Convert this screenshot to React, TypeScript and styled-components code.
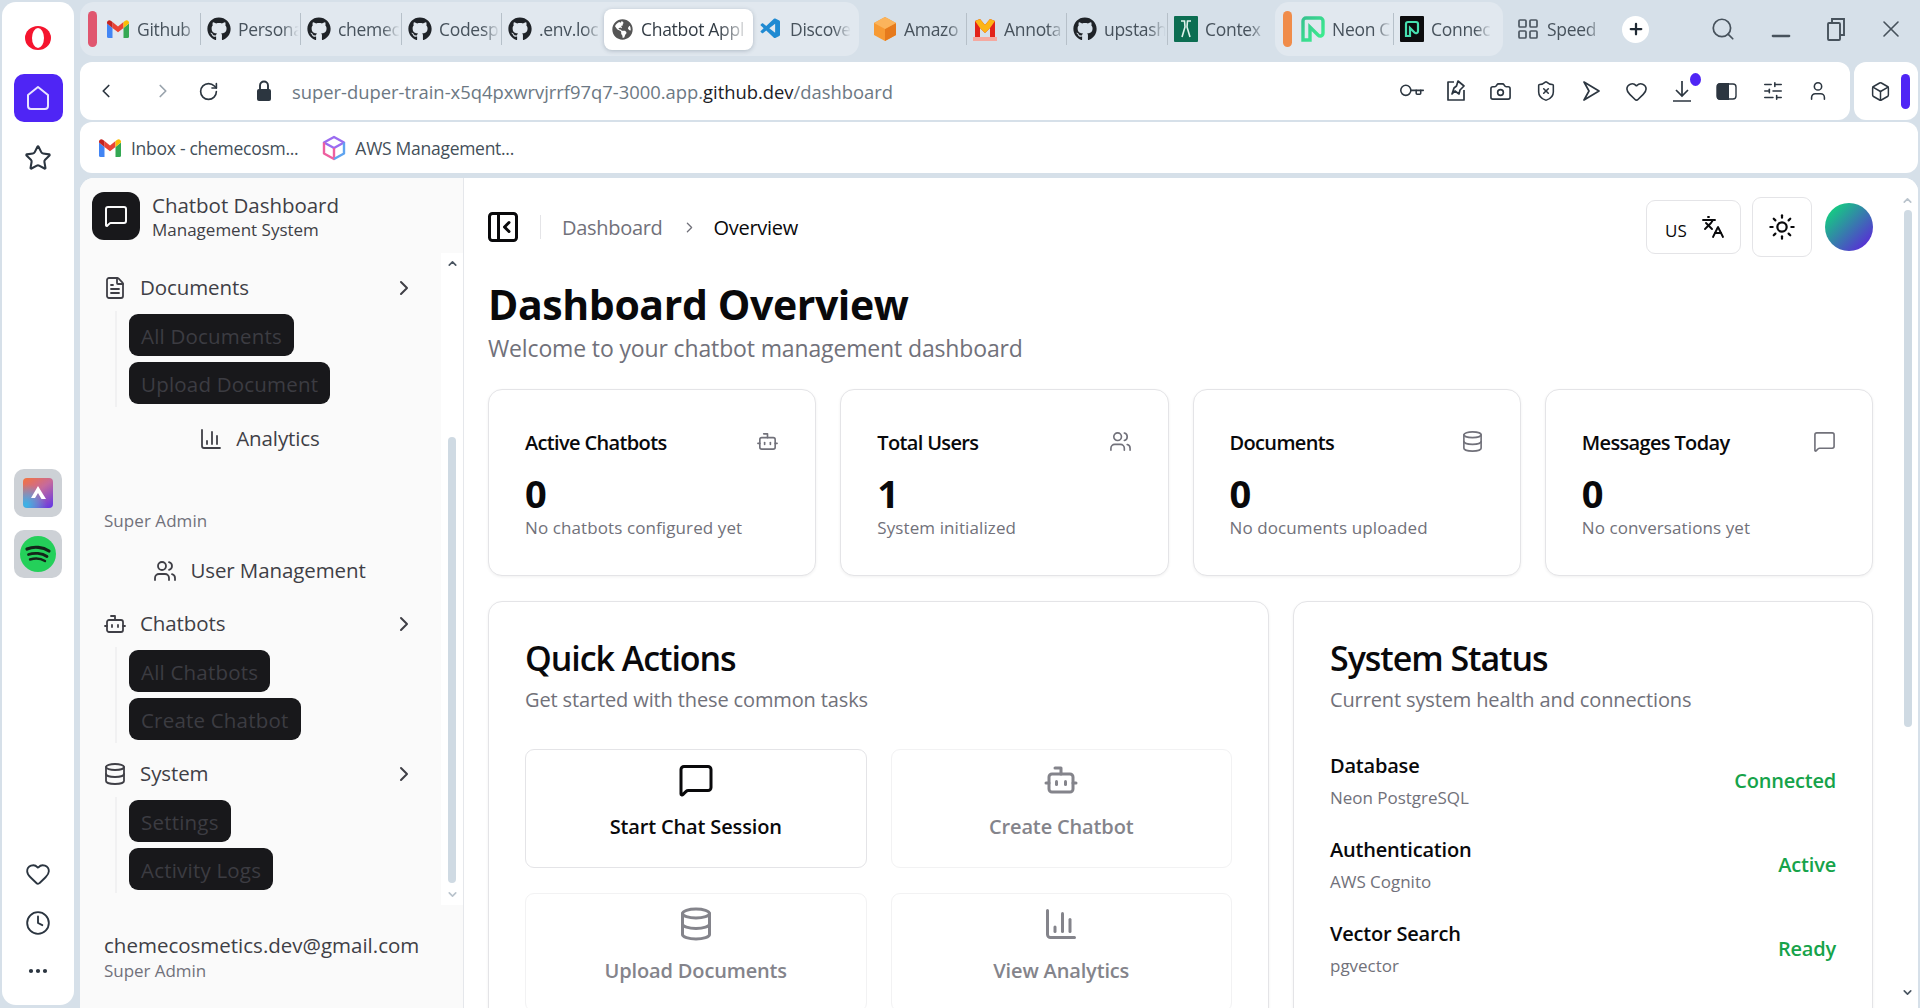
import React from 'react';
import styled, { createGlobalStyle } from 'styled-components';
import {
  Bot,
  Box,
  Camera,
  ChartColumn,
  ChevronDown,
  ChevronLeft,
  ChevronRight,
  ChevronUp,
  Clock,
  Database,
  Ellipsis,
  FileText,
  Heart,
  Key,
  Languages,
  LayoutGrid,
  MessageSquare,
  Minus,
  PanelLeftClose,
  Plus,
  RotateCw,
  Search,
  ShieldX,
  SlidersHorizontal,
  Star,
  Sun,
  User,
  Users,
  X,
} from 'lucide-react';
import { FaGithub, FaGlobeAmericas } from 'react-icons/fa';
import { VscVscode } from 'react-icons/vsc';

const GlobalStyle = createGlobalStyle`
  * { box-sizing: border-box; }
  html, body {
    margin: 0;
    height: 1008px;
    overflow: hidden;
    background: #d6e0e9;
    font-family: "Open Sans", "Noto Sans", "Liberation Sans", sans-serif;
  }
`;

const Shell = styled.div`
  display: flex;
  gap: 6px;
  height: 1008px;
  padding: 2px 2px 0 2px;
`;

/* opera rail */
const Rail = styled.aside`
  width: 72px;
  height: 1003px;
  flex: none;
  display: flex;
  flex-direction: column;
  align-items: center;
  background: #fff;
  border-radius: 14px;
  color: #2b3540;
`;

const RailLogo = styled.div`
  height: 24px;
  margin-top: 24px;
  display: flex;
`;

const HomeButton = styled.div`
  width: 49px;
  height: 48px;
  margin-top: 24px;
  border-radius: 10px;
  background: #4f25f5;
  display: flex;
  align-items: center;
  justify-content: center;
`;

const RailStar = styled.div`
  margin-top: 22px;
  height: 28px;
  display: flex;
`;

const AppTile = styled.div<{ $top: number }>`
  width: 48px;
  height: 48px;
  margin-top: ${(p) => p.$top}px;
  background: #cdd1d6;
  border-radius: 10px;
  display: flex;
  align-items: center;
  justify-content: center;
`;

const AriaMark = styled.div`
  width: 30px;
  height: 30px;
  border-radius: 4px;
  background:
    radial-gradient(circle at 10% 90%, #37b6e8 0%, transparent 55%),
    linear-gradient(145deg, #f5743c 0%, #c66a9c 45%, #5f35e8 100%);
  display: flex;
  align-items: center;
  justify-content: center;
`;

const RailBottom = styled.div`
  margin-top: auto;
  padding-bottom: 22px;
  display: flex;
  flex-direction: column;
  align-items: center;
  gap: 23px;
`;

const Column = styled.div`
  flex: 1;
  min-width: 0;
  display: flex;
  flex-direction: column;
`;

/* tab strip */
const TabStrip = styled.div`
  height: 54px;
  flex: none;
  display: flex;
  align-items: stretch;
`;

const TabGroup = styled.div<{ $width: number }>`
  display: flex;
  align-items: center;
  width: ${(p) => p.$width}px;
  padding-left: 8px;
  background: #e1e8ef;
  border-radius: 14px;
`;

const LooseTabs = styled.div`
  width: 408px;
  margin-left: 8px;
  display: flex;
  align-items: center;
`;

const GroupMarker = styled.span<{ $color: string }>`
  width: 9px;
  height: 36px;
  border-radius: 5px;
  background: ${(p) => p.$color};
  margin-right: 3px;
  flex: none;
`;

const Tab = styled.div<{ $width?: number; $sep?: boolean; $active?: boolean }>`
  width: ${(p) => p.$width ?? 100}px;
  height: ${(p) => (p.$active ? '41px' : '32px')};
  flex: none;
  display: flex;
  align-items: center;
  gap: 7px;
  padding-left: 6px;
  border-right: 1px solid ${(p) => (p.$sep ? '#b6c0c9' : 'transparent')};
  font-size: 17.5px;
  letter-spacing: -0.3px;
  color: #47525c;
  ${(p) =>
    p.$active
      ? `background:#fff;border-radius:8px;box-shadow:0 1px 4px rgba(60,80,100,.3);color:#333c45;`
      : ''}
`;

const SpeedTab = styled(Tab)`
  align-self: center;
  margin-left: 7px;
`;

const TabIcon = styled.span`
  width: 24px;
  height: 24px;
  flex: none;
  display: flex;
  align-items: center;
  justify-content: center;
  color: #1f2328;
`;

const TabLabel = styled.span`
  flex: 1;
  min-width: 0;
  overflow: hidden;
  white-space: nowrap;
  -webkit-mask-image: linear-gradient(90deg, #000 70%, transparent 98%);
  mask-image: linear-gradient(90deg, #000 70%, transparent 98%);
`;

const NewTab = styled.div`
  width: 27px;
  height: 27px;
  margin-left: 18px;
  align-self: center;
  border-radius: 50%;
  background: #fff;
  display: flex;
  align-items: center;
  justify-content: center;
  color: #1f2933;
`;

const WindowTools = styled.div`
  margin-left: auto;
  display: flex;
  align-items: center;
  gap: 31px;
  padding-right: 13px;
  color: #47525c;
`;

const MinimizeIcon = styled(Minus)`
  margin-top: 14px;
`;

/* address row */
const AddressRow = styled.div`
  height: 58px;
  flex: none;
  margin-top: 6px;
  display: flex;
  gap: 4px;
`;

const AddressBar = styled.div`
  flex: 1;
  display: flex;
  align-items: center;
  background: #fff;
  border-radius: 12px;
  padding-left: 15px;
  color: #2c3640;
`;

const NavButton = styled.span<{ $dim?: boolean; $gap: number }>`
  display: flex;
  margin-right: ${(p) => p.$gap}px;
  color: ${(p) => (p.$dim ? '#9aa4ad' : '#2c3640')};
`;

const Url = styled.div`
  font-size: 18.4px;
  letter-spacing: -0.01px;
  color: #6c7883;
  white-space: nowrap;
  b {
    font-weight: 400;
    color: #1b2026;
  }
`;

const AddressTools = styled.div`
  margin-left: auto;
  display: flex;
  align-items: center;
  gap: 22.8px;
  padding-right: 21px;
`;

const KeyIcon = styled(Key)`
  transform: rotate(45deg);
`;

const DownloadWrap = styled.span`
  position: relative;
  display: flex;
`;

const Dot = styled.span`
  position: absolute;
  top: -6px;
  right: -8px;
  width: 11px;
  height: 13px;
  border-radius: 50%;
  background: #4f25f5;
`;

const ExtensionBar = styled.div`
  width: 64px;
  flex: none;
  display: flex;
  align-items: center;
  gap: 10px;
  padding-left: 16px;
  background: #fff;
  border-radius: 12px;
  color: #2c3640;
`;

const ExtensionMark = styled.span`
  width: 9px;
  height: 35px;
  border-radius: 5px;
  background: #4f25f5;
`;

const BookmarksBar = styled.div`
  height: 51px;
  flex: none;
  margin-top: 2px;
  display: flex;
  align-items: center;
  padding-left: 18px;
  background: #fff;
  border-radius: 12px;
  font-size: 17.5px;
  letter-spacing: -0.28px;
  color: #444f59;
`;

const Bookmark = styled.div`
  display: flex;
  align-items: center;
  gap: 9px;
  margin-right: 24px;
`;

/* page */
const Page = styled.div`
  margin-top: 5px;
  flex: 1;
  min-height: 0;
  display: flex;
  overflow: hidden;
  background: #fff;
  border-radius: 14px 14px 0 0;
`;

const Sidebar = styled.aside`
  width: 384px;
  flex: none;
  display: flex;
  flex-direction: column;
  background: #fafafa;
  border-right: 1px solid #e5e7eb;
`;

const SidebarHead = styled.div`
  height: 75px;
  flex: none;
  display: flex;
  align-items: flex-start;
  gap: 12px;
  padding: 14px 0 0 12px;
`;

const LogoBox = styled.div`
  width: 48px;
  height: 48px;
  border-radius: 12px;
  background: #18181b;
  color: #fafafa;
  display: flex;
  align-items: center;
  justify-content: center;
`;

const BrandName = styled.div`
  font-size: 20.5px;
  line-height: 27px;
  font-weight: 500;
  letter-spacing: -0.03px;
  color: #3f3f46;
`;

const BrandSub = styled.div`
  font-size: 17px;
  line-height: 22px;
  color: #3f3f46;
`;

const SidebarBody = styled.div`
  height: 652px;
  flex: none;
  display: flex;
`;

const NavList = styled.nav`
  flex: 1;
  min-width: 0;
  padding: 11px 11px 0 12px;
`;

const NavRow = styled.div<{ $top?: number; $centered?: boolean }>`
  height: 47px;
  margin-top: ${(p) => p.$top ?? 0}px;
  display: flex;
  align-items: center;
  gap: 13px;
  padding: 0 14px 0 11px;
  justify-content: ${(p) => (p.$centered ? 'center' : 'flex-start')};
  font-size: 20.5px;
  font-weight: 500;
  letter-spacing: -0.1px;
  color: #3f3f46;
  svg {
    flex: none;
  }
`;

const RowText = styled.span`
  margin-bottom: 2px;
`;

const RowChevron = styled.span`
  margin-left: auto;
  display: flex;
`;

const SubList = styled.div`
  margin-left: 23px;
  padding: 3px 0 3px 12px;
  border-left: 2px solid #f1f1f2;
  display: flex;
  flex-direction: column;
  align-items: flex-start;
  gap: 6px;
`;

const SubPill = styled.div`
  height: 42px;
  padding: 1px 12px 0;
  display: flex;
  align-items: center;
  border-radius: 9px;
  background: #18181b;
  color: #3c3c42;
  font-size: 20.5px;
  font-weight: 500;
  letter-spacing: 0.2px;
`;

const GroupLabel = styled.div`
  height: 24px;
  margin-top: 47px;
  padding-left: 12px;
  line-height: 24px;
  font-size: 17px;
  font-weight: 500;
  letter-spacing: 0.05px;
  color: #71717a;
`;

const ScrollTrack = styled.div<{ $width: number; $bg: string }>`
  width: ${(p) => p.$width}px;
  flex: none;
  display: flex;
  flex-direction: column;
  align-items: center;
  background: ${(p) => p.$bg};
  color: #66727e;
`;

const ScrollArrow = styled.span<{ $top?: number; $faint?: boolean }>`
  display: flex;
  margin-top: ${(p) => p.$top ?? 0}px;
  color: ${(p) => (p.$faint ? '#b9c3cc' : '#4a5561')};
`;

const ScrollThumb = styled.div<{ $top: number; $height: number }>`
  width: 8px;
  height: ${(p) => p.$height}px;
  margin-top: ${(p) => p.$top}px;
  border-radius: 4px;
  background: #cfdae3;
`;

const SidebarFoot = styled.div`
  flex: 1;
  padding: 26px 0 0 24px;
`;

const FootEmail = styled.div`
  font-size: 20.5px;
  line-height: 28px;
  font-weight: 500;
  color: #3f3f46;
`;

const FootRole = styled.div`
  font-size: 17px;
  line-height: 24px;
  letter-spacing: -0.05px;
  color: #71717a;
`;

const Main = styled.main`
  flex: 1;
  min-width: 0;
  padding: 19px 24px 0 24px;
  overflow: hidden;
`;

const TopBar = styled.header`
  height: 60px;
  display: flex;
  align-items: center;
`;

const SidebarToggle = styled(PanelLeftClose)`
  margin-left: -3px;
`;

const BarDivider = styled.span`
  width: 1px;
  height: 24px;
  margin: 0 21px 0 19px;
  background: #e4e4e7;
`;

const Crumb = styled.span<{ $current?: boolean }>`
  font-size: 20px;
  letter-spacing: -0.3px;
  color: ${(p) => (p.$current ? '#09090b' : '#71717a')};
`;

const CrumbArrow = styled.span`
  display: flex;
  margin: 0 16px 0 18px;
  color: #71717a;
`;

const TopActions = styled.div`
  margin-left: auto;
  display: flex;
  align-items: center;
`;

const LangButton = styled.div`
  width: 95px;
  height: 54px;
  display: flex;
  align-items: center;
  gap: 14px;
  padding-left: 18px;
  border: 1px solid #e4e4e7;
  border-radius: 9px;
  font-size: 17px;
  color: #09090b;
  span {
    margin-top: 6px;
  }
`;

const ThemeButton = styled.div`
  width: 60px;
  height: 60px;
  margin-left: 11px;
  display: flex;
  align-items: center;
  justify-content: center;
  border: 1px solid #e4e4e7;
  border-radius: 9px;
  color: #09090b;
`;

const Avatar = styled.div`
  width: 48px;
  height: 48px;
  margin-left: 13px;
  border-radius: 50%;
  background: linear-gradient(135deg, #12d27f 10%, #5a2ad8 90%);
`;

const PageTitle = styled.h1`
  margin: 25px 0 0;
  font-size: 41px;
  line-height: 44px;
  font-weight: 700;
  letter-spacing: -0.4px;
  color: #09090b;
`;

const PageSub = styled.p`
  margin: 7px 0 0;
  font-size: 23px;
  line-height: 30px;
  letter-spacing: -0.14px;
  color: #71717a;
`;

const StatGrid = styled.div`
  margin-top: 26px;
  display: grid;
  grid-template-columns: repeat(4, 1fr);
  gap: 24px;
`;

const Card = styled.section`
  background: #fff;
  border: 1px solid #e4e4e7;
  border-radius: 14px;
  box-shadow: 0 1px 3px rgba(0, 0, 0, 0.06);
`;

const StatCard = styled(Card)`
  height: 187px;
  padding: 38px 36px 0;
`;

const StatHead = styled.div`
  height: 28px;
  display: flex;
  align-items: center;
  justify-content: space-between;
  color: #71717a;
  svg {
    margin-top: -2px;
  }
`;

const StatTitle = styled.span`
  font-size: 20px;
  font-weight: 600;
  letter-spacing: -0.65px;
  color: #09090b;
`;

const StatValue = styled.div`
  margin-top: 15px;
  font-size: 38px;
  line-height: 44px;
  font-weight: 700;
  color: #09090b;
`;

const StatNote = styled.div`
  margin-top: 1px;
  font-size: 17px;
  line-height: 24px;
  letter-spacing: 0.1px;
  color: #71717a;
`;

const PanelGrid = styled.div`
  margin-top: 25px;
  display: grid;
  grid-template-columns: 781px 1fr;
  gap: 24px;
`;

const Panel = styled(Card)`
  height: 520px;
  padding: 34px 36px 0;
`;

const PanelTitle = styled.h2`
  margin: 0;
  font-size: 34px;
  line-height: 44px;
  font-weight: 600;
  letter-spacing: -1.05px;
  color: #09090b;
`;

const PanelSub = styled.p`
  margin: 6px 0 0;
  font-size: 20px;
  line-height: 28px;
  letter-spacing: -0.13px;
  color: #71717a;
`;

const ActionGrid = styled.div`
  margin-top: 35px;
  display: grid;
  grid-template-columns: 1fr 1fr;
  gap: 25px 24px;
`;

const ActionCard = styled.div<{ $dim?: boolean }>`
  height: 119px;
  display: flex;
  flex-direction: column;
  align-items: center;
  padding-top: 12px;
  border: 1px solid ${(p) => (p.$dim ? '#f2f2f3' : '#e4e4e7')};
  border-radius: 9px;
  color: ${(p) => (p.$dim ? '#84848b' : '#09090b')};
  font-size: 20px;
  font-weight: 600;
  letter-spacing: -0.15px;
`;

const ActionText = styled.span`
  margin-top: 15px;
  line-height: 28px;
`;

const StatusList = styled.div`
  margin-top: 38px;
  display: flex;
  flex-direction: column;
  gap: 26px;
`;

const StatusRow = styled.div`
  height: 58px;
  display: flex;
  align-items: center;
  justify-content: space-between;
`;

const StatusName = styled.div`
  font-size: 20px;
  line-height: 28px;
  font-weight: 600;
  letter-spacing: -0.2px;
  color: #09090b;
`;

const StatusNote = styled.div`
  margin-top: 6px;
  font-size: 17px;
  line-height: 24px;
  letter-spacing: -0.02px;
  color: #71717a;
`;

const StatusValue = styled.span`
  margin-top: -2px;
  font-size: 20px;
  font-weight: 600;
  letter-spacing: -0.2px;
  color: #16a34a;
`;

const GmailIcon = ({ size = 24 }: { size?: number }) => (
  <svg width={size} height={size} viewBox="0 0 24 24">
    <path d="M1 6.5V19.5A1.5 1.5 0 0 0 2.5 21H6.5V11L1 6.5Z" fill="#4285F4" />
    <path d="M23 6.5V19.5A1.5 1.5 0 0 1 21.5 21H17.5V11L23 6.5Z" fill="#34A853" />
    <path d="M6.5 11V5L12 9.5L17.5 5V11L12 15.2L6.5 11Z" fill="#EA4335" />
    <path d="M1 6.5V5.5C1 3.5 3.3 2.4 4.8 3.7L6.5 5V11L1 6.5Z" fill="#C5221F" />
    <path d="M23 6.5V5.5C23 3.5 20.7 2.4 19.2 3.7L17.5 5V11L23 6.5Z" fill="#FBBC04" />
  </svg>
);

const AwsCube = () => (
  <svg width={24} height={26} viewBox="0 0 24 26" fill="none" strokeWidth="2.4" strokeLinejoin="round">
    <path d="M12 2L22 7.5L12 13L2 7.5L12 2Z" stroke="#9b6cf0" />
    <path d="M2 7.5V18.5L12 24V13" stroke="#ee5fa0" />
    <path d="M22 7.5V18.5L12 24" stroke="#5fa4f0" />
  </svg>
);

const AmazonBox = () => (
  <svg width={24} height={26} viewBox="0 0 24 26">
    <path d="M12 1L23 7V19L12 25L1 19V7L12 1Z" fill="#f79a33" />
    <path d="M12 13L23 7V19L12 25V13Z" fill="#e67a1c" />
    <path d="M12 13L1 7L12 1L23 7L12 13Z" fill="#fbb45c" />
  </svg>
);

const AnnotateIcon = () => (
  <svg width={24} height={24} viewBox="0 0 24 24">
    <rect x="0" y="20" width="24" height="4" fill="#f5a9a0" />
    <path d="M2 20V4L7 2L12 8L17 2L22 4V20H17V11L12 16L7 11V20Z" fill="#e2231a" />
    <path d="M2 4L7 2L12 8L17 2L22 4L17 11L12 16L7 11Z" fill="#fdb515" />
  </svg>
);

const ContextIcon = () => (
  <svg width={24} height={26} viewBox="0 0 24 26" fill="none" stroke="#dff3ec" strokeWidth="1.6">
    <rect width="24" height="26" rx="1" fill="#0c6e52" stroke="none" />
    <path d="M7 5H10.5L11 11L8 21M17 5H13.5L13 11L16 21" />
  </svg>
);

const NeonIcon = () => (
  <svg width={24} height={26} viewBox="0 0 24 26" fill="none">
    <defs>
      <linearGradient id="neonGrad" x1="0" y1="0" x2="1" y2="1">
        <stop offset="0" stopColor="#37c38f" />
        <stop offset="1" stopColor="#3cf08f" />
      </linearGradient>
    </defs>
    <path
      d="M2 24V5A3 3 0 0 1 5 2H19A3 3 0 0 1 22 5V17C22 20 19 21 17 19L9 11V24Z"
      stroke="url(#neonGrad)"
      strokeWidth="3.4"
    />
  </svg>
);

const ConnectIcon = () => (
  <svg width={24} height={26} viewBox="0 0 24 26" fill="none">
    <rect width="24" height="26" rx="1" fill="#0c0c0e" />
    <path
      d="M6 20V8A2 2 0 0 1 8 6H16A2 2 0 0 1 18 8V15C18 17 16 18 14.5 16.5L10 12V20Z"
      stroke="#46e0b0"
      strokeWidth="2.2"
    />
  </svg>
);

const PinNoteIcon = () => (
  <svg width={22} height={24} viewBox="0 0 22 24" fill="none" stroke="currentColor" strokeWidth="1.7" strokeLinejoin="round">
    <path d="M9 3H3V21H19V11" />
    <path d="M13 2L19 7L15 11L14 15L10 12L7 15L9 9L11.5 7Z" />
  </svg>
);

const FlowIcon = () => (
  <svg width={22} height={24} viewBox="0 0 22 24" fill="none" stroke="currentColor" strokeWidth="1.7" strokeLinejoin="round">
    <path d="M4 3L19 12L4 21L9 12L4 3Z" />
  </svg>
);

const ContrastIcon = () => (
  <svg width={24} height={24} viewBox="0 0 24 24" fill="none">
    <rect x="2" y="5" width="19" height="15" rx="3" stroke="#2c3640" strokeWidth="1.4" />
    <path d="M5 4H14V21H5A3 3 0 0 1 2 18V7A3 3 0 0 1 5 4Z" fill="#2c3640" />
  </svg>
);

const LockIcon = () => (
  <svg width={16} height={22} viewBox="0 0 16 22" fill="none">
    <path d="M4 10V5.5A4 4 0 0 1 12 5.5V10" stroke="#2c3640" strokeWidth="1.9" />
    <rect x="1" y="9" width="14" height="12" rx="2" fill="#2c3640" />
  </svg>
);

const SpotifyIcon = () => (
  <svg width={36} height={36} viewBox="0 0 36 36" fill="none" stroke="#14251a" strokeLinecap="round">
    <circle cx="18" cy="18" r="18" fill="#24d05a" stroke="none" />
    <path d="M7 13C14 10 23 11 29 15" strokeWidth="3.2" />
    <path d="M8.5 18.5C14 16.5 22 17 27 20.5" strokeWidth="2.8" />
    <path d="M10 23.5C15 22 21 22.5 25 25" strokeWidth="2.4" />
  </svg>
);

const tabsFirst = [
  { label: 'Github', icon: <GmailIcon />, width: 101, sep: true },
  { label: 'Persona', icon: <FaGithub size={24} />, width: 100, sep: true },
  { label: 'chemec', icon: <FaGithub size={24} />, width: 101, sep: true },
  { label: 'Codesp', icon: <FaGithub size={24} />, width: 100, sep: true },
  { label: '.env.loc', icon: <FaGithub size={24} />, width: 102 },
];

const tabsLoose = [
  { label: 'Amazo', icon: <AmazonBox />, sep: true, width: 100 },
  { label: 'Annota', icon: <AnnotateIcon />, sep: true, width: 100 },
  { label: 'upstash', icon: <FaGithub size={24} />, sep: true, width: 101 },
  { label: 'Contex', icon: <ContextIcon />, width: 100 },
];

const subLists: Record<string, string[]> = {
  Documents: ['All Documents', 'Upload Document'],
  Chatbots: ['All Chatbots', 'Create Chatbot'],
  System: ['Settings', 'Activity Logs'],
};

const stats = [
  { title: 'Active Chatbots', value: '0', note: 'No chatbots configured yet', icon: <Bot size={23} strokeWidth={1.7} /> },
  { title: 'Total Users', value: '1', note: 'System initialized', icon: <Users size={23} strokeWidth={1.7} /> },
  { title: 'Documents', value: '0', note: 'No documents uploaded', icon: <Database size={23} strokeWidth={1.7} /> },
  { title: 'Messages Today', value: '0', note: 'No conversations yet', icon: <MessageSquare size={23} strokeWidth={1.7} /> },
];

const actions = [
  { label: 'Start Chat Session', Icon: MessageSquare },
  { label: 'Create Chatbot', Icon: Bot, dim: true },
  { label: 'Upload Documents', Icon: Database, dim: true },
  { label: 'View Analytics', Icon: ChartColumn, dim: true },
];

const services = [
  { name: 'Database', note: 'Neon PostgreSQL', status: 'Connected' },
  { name: 'Authentication', note: 'AWS Cognito', status: 'Active' },
  { name: 'Vector Search', note: 'pgvector', status: 'Ready' },
];

const CollapsibleNav = ({ title, icon, top }: { title: string; icon: React.ReactNode; top: number }) => (
  <>
    <NavRow $top={top}>
      {icon}
      <RowText>{title}</RowText>
      <RowChevron>
        <ChevronRight size={24} strokeWidth={2} />
      </RowChevron>
    </NavRow>
    <SubList>
      {subLists[title].map((item) => (
        <SubPill key={item}>{item}</SubPill>
      ))}
    </SubList>
  </>
);

const App = () => {
  return (
    <>
      <GlobalStyle />
      <Shell>
        <Rail>
          <RailLogo>
            <svg width={26} height={24} viewBox="0 0 26 24">
              <ellipse cx="13" cy="12" rx="13" ry="12" fill="#f5142e" />
              <ellipse cx="13" cy="12" rx="6" ry="10" fill="#fff" />
            </svg>
          </RailLogo>
          <HomeButton>
            <svg width={24} height={26} viewBox="0 0 24 26" fill="none" stroke="#e9e4ff" strokeWidth="2" strokeLinejoin="round">
              <path d="M12 2L22 10V21A3 3 0 0 1 19 24H5A3 3 0 0 1 2 21V10L12 2Z" />
            </svg>
          </HomeButton>
          <RailStar>
            <Star size={28} strokeWidth={1.8} />
          </RailStar>
          <AppTile $top={297}>
            <AriaMark>
              <svg width={20} height={20} viewBox="0 0 20 20" fill="#fff">
                <path d="M10 3L13 8L18 16H13.5L10 10L7 15H3L10 3Z" />
              </svg>
            </AriaMark>
          </AppTile>
          <AppTile $top={13}>
            <SpotifyIcon />
          </AppTile>
          <RailBottom>
            <Heart size={26} strokeWidth={1.7} />
            <Clock size={26} strokeWidth={1.7} />
            <Ellipsis size={24} strokeWidth={2.2} />
          </RailBottom>
        </Rail>

        <Column>
          <TabStrip>
            <TabGroup $width={779}>
              <GroupMarker $color="#e0566f" />
              {tabsFirst.map((t) => (
                <Tab key={t.label} $width={t.width} $sep={t.sep}>
                  <TabIcon>{t.icon}</TabIcon>
                  <TabLabel>{t.label}</TabLabel>
                </Tab>
              ))}
              <Tab $width={149} $active>
                <TabIcon>
                  <FaGlobeAmericas size={21} color="#555" />
                </TabIcon>
                <TabLabel>Chatbot Appl</TabLabel>
              </Tab>
              <Tab>
                <TabIcon>
                  <VscVscode size={24} color="#1f8ad2" />
                </TabIcon>
                <TabLabel>Discove</TabLabel>
              </Tab>
            </TabGroup>
            <LooseTabs>
              {tabsLoose.map((t) => (
                <Tab key={t.label} $width={t.width} $sep={t.sep}>
                  <TabIcon>{t.icon}</TabIcon>
                  <TabLabel>{t.label}</TabLabel>
                </Tab>
              ))}
            </LooseTabs>
            <TabGroup $width={228}>
              <GroupMarker $color="#f08c4a" />
              <Tab $width={99} $sep>
                <TabIcon>
                  <NeonIcon />
                </TabIcon>
                <TabLabel>Neon C</TabLabel>
              </Tab>
              <Tab $width={100}>
                <TabIcon>
                  <ConnectIcon />
                </TabIcon>
                <TabLabel>Connec</TabLabel>
              </Tab>
            </TabGroup>
            <SpeedTab $width={94}>
              <TabIcon>
                <LayoutGrid size={24} strokeWidth={1.7} color="#4d5762" />
              </TabIcon>
              <TabLabel>Speed</TabLabel>
            </SpeedTab>
            <NewTab>
              <Plus size={18} strokeWidth={3} />
            </NewTab>
            <WindowTools>
              <Search size={26} strokeWidth={1.6} />
              <MinimizeIcon size={28} strokeWidth={2} />
              <svg width={20} height={24} viewBox="0 0 20 24" fill="none" stroke="currentColor" strokeWidth="1.9">
                <rect x="2" y="6" width="12" height="17" rx="1" />
                <path d="M6 6V2H18V18H14" />
              </svg>
              <X size={28} strokeWidth={1.4} />
            </WindowTools>
          </TabStrip>

          <AddressRow>
            <AddressBar>
              <NavButton $gap={35}>
                <ChevronLeft size={22} strokeWidth={1.9} />
              </NavButton>
              <NavButton $dim $gap={24}>
                <ChevronRight size={22} strokeWidth={1.9} />
              </NavButton>
              <NavButton $gap={37}>
                <RotateCw size={21} strokeWidth={1.9} />
              </NavButton>
              <NavButton $gap={20}>
                <LockIcon />
              </NavButton>
              <Url>
                super-duper-train-x5q4pxwrvjrrf97q7-3000.app.<b>github.dev</b>/dashboard
              </Url>
              <AddressTools>
                <KeyIcon size={22} strokeWidth={1.7} />
                <PinNoteIcon />
                <Camera size={23} strokeWidth={1.7} />
                <ShieldX size={22} strokeWidth={1.7} />
                <FlowIcon />
                <Heart size={23} strokeWidth={1.7} />
                <DownloadWrap>
                  <svg width={22} height={24} viewBox="0 0 22 24" fill="none" stroke="currentColor" strokeWidth="1.7">
                    <path d="M11 2V16M5 11L11 17L17 11M2 22H20" />
                  </svg>
                  <Dot />
                </DownloadWrap>
                <ContrastIcon />
                <SlidersHorizontal size={22} strokeWidth={1.7} />
                <User size={22} strokeWidth={1.7} />
              </AddressTools>
            </AddressBar>
            <ExtensionBar>
              <Box size={21} strokeWidth={1.7} />
              <ExtensionMark />
            </ExtensionBar>
          </AddressRow>

          <BookmarksBar>
            <Bookmark>
              <GmailIcon />
              Inbox - chemecosm...
            </Bookmark>
            <Bookmark>
              <AwsCube />
              AWS Management...
            </Bookmark>
          </BookmarksBar>

          <Page>
            <Sidebar>
              <SidebarHead>
                <LogoBox>
                  <MessageSquare size={24} strokeWidth={2} />
                </LogoBox>
                <div>
                  <BrandName>Chatbot Dashboard</BrandName>
                  <BrandSub>Management System</BrandSub>
                </div>
              </SidebarHead>
              <SidebarBody>
                <NavList>
                  <CollapsibleNav title="Documents" top={0} icon={<FileText size={24} strokeWidth={1.8} />} />
                  <NavRow $top={8} $centered>
                    <ChartColumn size={24} strokeWidth={1.8} />
                    <RowText>Analytics</RowText>
                  </NavRow>
                  <GroupLabel>Super Admin</GroupLabel>
                  <NavRow $top={14} $centered>
                    <Users size={24} strokeWidth={1.8} />
                    <RowText>User Management</RowText>
                  </NavRow>
                  <CollapsibleNav title="Chatbots" top={6} icon={<Bot size={24} strokeWidth={1.8} />} />
                  <CollapsibleNav title="System" top={7} icon={<Database size={24} strokeWidth={1.8} />} />
                </NavList>
                <ScrollTrack $width={22} $bg="#fff">
                  <ScrollArrow $top={4}>
                    <ChevronUp size={13} strokeWidth={3} />
                  </ScrollArrow>
                  <ScrollThumb $top={167} $height={446} />
                  <ScrollArrow $top={5} $faint>
                    <ChevronDown size={13} strokeWidth={3} />
                  </ScrollArrow>
                </ScrollTrack>
              </SidebarBody>
              <SidebarFoot>
                <FootEmail>chemecosmetics.dev@gmail.com</FootEmail>
                <FootRole>Super Admin</FootRole>
              </SidebarFoot>
            </Sidebar>

            <Main>
              <TopBar>
                <SidebarToggle size={36} strokeWidth={2} color="#09090b" />
                <BarDivider />
                <Crumb>Dashboard</Crumb>
                <CrumbArrow>
                  <ChevronRight size={17} strokeWidth={1.8} />
                </CrumbArrow>
                <Crumb $current>Overview</Crumb>
                <TopActions>
                  <LangButton>
                    <span>US</span>
                    <Languages size={24} strokeWidth={1.9} />
                  </LangButton>
                  <ThemeButton>
                    <Sun size={28} strokeWidth={1.9} />
                  </ThemeButton>
                  <Avatar />
                </TopActions>
              </TopBar>

              <PageTitle>Dashboard Overview</PageTitle>
              <PageSub>Welcome to your chatbot management dashboard</PageSub>

              <StatGrid>
                {stats.map((s) => (
                  <StatCard key={s.title}>
                    <StatHead>
                      <StatTitle>{s.title}</StatTitle>
                      {s.icon}
                    </StatHead>
                    <StatValue>{s.value}</StatValue>
                    <StatNote>{s.note}</StatNote>
                  </StatCard>
                ))}
              </StatGrid>

              <PanelGrid>
                <Panel>
                  <PanelTitle>Quick Actions</PanelTitle>
                  <PanelSub>Get started with these common tasks</PanelSub>
                  <ActionGrid>
                    {actions.map(({ label, Icon, dim }) => (
                      <ActionCard key={label} $dim={dim}>
                        <Icon size={36} strokeWidth={2} />
                        <ActionText>{label}</ActionText>
                      </ActionCard>
                    ))}
                  </ActionGrid>
                </Panel>
                <Panel>
                  <PanelTitle>System Status</PanelTitle>
                  <PanelSub>Current system health and connections</PanelSub>
                  <StatusList>
                    {services.map((s) => (
                      <StatusRow key={s.name}>
                        <div>
                          <StatusName>{s.name}</StatusName>
                          <StatusNote>{s.note}</StatusNote>
                        </div>
                        <StatusValue>{s.status}</StatusValue>
                      </StatusRow>
                    ))}
                  </StatusList>
                </Panel>
              </PanelGrid>
            </Main>

            <ScrollTrack $width={21} $bg="#fff">
              <ScrollArrow $top={16} $faint>
                <ChevronUp size={13} strokeWidth={3} />
              </ScrollArrow>
              <ScrollThumb $top={3} $height={517} />
              <ScrollArrow $top={259}>
                <ChevronDown size={13} strokeWidth={3} />
              </ScrollArrow>
            </ScrollTrack>
          </Page>
        </Column>
      </Shell>
    </>
  );
};

export default App;
